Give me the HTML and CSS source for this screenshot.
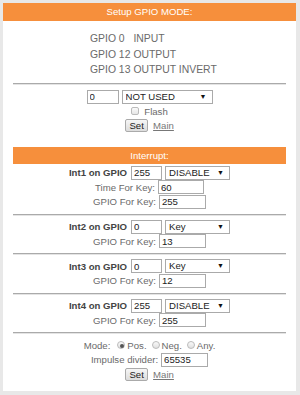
FILE: index.html
```html
<!DOCTYPE html>
<html>
<head>
<meta charset="utf-8">
<link rel="stylesheet" href="styles.css">
</head>
<body>
<div class="panel">
  <div class="title">Setup GPIO MODE:</div>
  <div class="content">
    <div class="gpio-list">
      <span>GPIO 0</span><span>INPUT</span>
      <span>GPIO 12</span><span>OUTPUT</span>
      <span>GPIO 13</span><span>OUTPUT INVERT</span>
    </div>
    <hr class="sep first">
    <div class="row">
      <input class="txt w32" type="text" value="0">
      <span class="sel w91"><select><option>NOT USED</option></select></span>
    </div>
    <div class="row small">
      <input class="chk" type="checkbox"><span class="lbl">Flash</span>
    </div>
    <div class="row">
      <button class="btn">Set</button><a class="link" href="#">Main</a>
    </div>

    <div class="subtitle">Interrupt:</div>

    <div class="row">
      <span class="name">Int1 on GPIO</span>
      <input class="txt w31" type="text" value="255">
      <span class="sel w65"><select><option>DISABLE</option></select></span>
    </div>
    <div class="row">
      <span class="lbl">Time For Key:</span>
      <input class="txt w46" type="text" value="60">
    </div>
    <div class="row">
      <span class="lbl">GPIO For Key:</span>
      <input class="txt w47" type="text" value="255">
    </div>
    <hr class="sep">

    <div class="row">
      <span class="name">Int2 on GPIO</span>
      <input class="txt w31" type="text" value="0">
      <span class="sel w65"><select><option>Key</option></select></span>
    </div>
    <div class="row">
      <span class="lbl">GPIO For Key:</span>
      <input class="txt w47" type="text" value="13">
    </div>
    <hr class="sep">

    <div class="row">
      <span class="name">Int3 on GPIO</span>
      <input class="txt w31" type="text" value="0">
      <span class="sel w65"><select><option>Key</option></select></span>
    </div>
    <div class="row">
      <span class="lbl">GPIO For Key:</span>
      <input class="txt w47" type="text" value="12">
    </div>
    <hr class="sep">

    <div class="row">
      <span class="name">Int4 on GPIO</span>
      <input class="txt w31" type="text" value="255">
      <span class="sel w65"><select><option>DISABLE</option></select></span>
    </div>
    <div class="row">
      <span class="lbl">GPIO For Key:</span>
      <input class="txt w47" type="text" value="255">
    </div>
    <hr class="sep">

    <div class="row radios">
      <span class="lbl mode">Mode:</span>
      <input class="rad" type="radio" name="m" checked><span class="lbl">Pos.</span>
      <input class="rad" type="radio" name="m"><span class="lbl">Neg.</span>
      <input class="rad" type="radio" name="m"><span class="lbl">Any.</span>
    </div>
    <div class="row">
      <span class="lbl">Impulse divider:</span>
      <input class="txt w47" type="text" value="65535">
    </div>
    <div class="row">
      <button class="btn">Set</button><a class="link" href="#">Main</a>
    </div>
  </div>
</div>
</body>
</html>
```

FILE: styles.css
```css
html, body {
  margin: 0;
  padding: 0;
}
body {
  background: #e8e8e8;
  font-family: "Liberation Sans", Arial, sans-serif;
  font-size: 9.6px;
  color: #6a6a6a;
}
.panel {
  margin: 3px;
  width: 293px;
  height: 388px;
  background: #fff;
}
.title {
  background: #f68f3c;
  color: #fff;
  text-align: center;
  height: 18px;
  line-height: 18px;
}
.content {
  padding: 0 10px;
}
.gpio-list {
  display: grid;
  grid-template-columns: auto auto;
  justify-content: start;
  column-gap: 3px;
  margin: 10px 0 0 77px;
  font-size: 10.4px;
  line-height: 15.5px;
  color: #6a6a6a;
}
.sep {
  margin: 4.5px 0 4px;
  border: 0;
  border-top: 1px solid #aaa;
  border-bottom: 1px solid #e4e4e4;
  height: 0;
}
.sep.first {
  margin: 5px 0;
}
.row {
  display: flex;
  justify-content: center;
  align-items: center;
  gap: 3px;
  height: 14.5px;
}
.row.small {
  height: 14px;
  gap: 5px;
}
.row.radios {
  gap: 0;
}
.name {
  font-weight: bold;
  color: #444;
  margin-right: 1px;
}
.lbl {
  color: #6a6a6a;
}
.mode {
  margin-right: 2px;
}
.txt {
  box-sizing: border-box;
  height: 14px;
  border: 1px solid #aaa;
  padding: 0 2px;
  font: inherit;
  color: #222;
  margin: 0;
  outline: none;
}
.w31 { width: 31px; }
.w32 { width: 32px; }
.w46 { width: 46px; }
.w47 { width: 47px; }
.sel {
  position: relative;
  display: inline-block;
  height: 14px;
}
.sel select {
  -webkit-appearance: none;
  appearance: none;
  box-sizing: border-box;
  width: 100%;
  height: 14px;
  border: 1px solid #aaa;
  border-radius: 0;
  background: #fff;
  font: inherit;
  color: #222;
  padding: 0 3px;
  margin: 0;
  line-height: 12px;
}
.sel::after {
  content: "\25BC";
  position: absolute;
  right: 6px;
  top: 3px;
  font-size: 7px;
  color: #111;
  pointer-events: none;
}
.w91 { width: 91px; }
.w65 { width: 65px; }
.chk {
  -webkit-appearance: none;
  appearance: none;
  width: 8px;
  height: 8px;
  border: 1px solid #bbb;
  border-radius: 2px;
  background: linear-gradient(#fafafa, #e6e6e6);
  margin: 0;
}
.rad {
  -webkit-appearance: none;
  appearance: none;
  width: 8px;
  height: 8px;
  border: 1px solid #bbb;
  border-radius: 50%;
  background: linear-gradient(#fafafa, #e0e0e0);
  margin: 0 2px 0 5px;
  position: relative;
}
.rad:checked::after {
  content: "";
  position: absolute;
  left: 2px;
  top: 2px;
  width: 4px;
  height: 4px;
  border-radius: 50%;
  background: #555;
}
.btn {
  box-sizing: border-box;
  height: 13px;
  width: 23px;
  padding: 0;
  margin: 0;
  border: 1px solid #aaa;
  border-radius: 2px;
  background: linear-gradient(#f6f6f6, #dcdcdc);
  font: inherit;
  color: #222;
  line-height: 11px;
}
.link {
  color: #777;
  text-decoration: underline;
  margin-left: 2px;
}
.subtitle {
  background: #f68f3c;
  color: #fff;
  text-align: center;
  height: 17px;
  line-height: 17px;
  margin-top: 14px;
  margin-bottom: 2px;
}
```
